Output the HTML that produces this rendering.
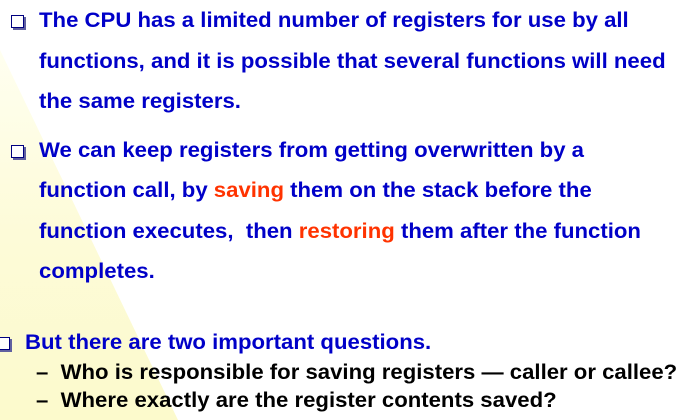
<html><body style="margin:0;width:681px;height:420px;overflow:hidden;background:#fff;position:relative;font-family:'Liberation Sans',sans-serif;font-weight:bold">
<svg width="681" height="420" style="position:absolute;left:0;top:0"><defs><linearGradient id="g" x1="0" y1="0" x2="0" y2="1"><stop offset="0" stop-color="#fffff0"/><stop offset="0.5" stop-color="#fdfbd8"/><stop offset="1" stop-color="#fcfacc"/></linearGradient></defs><polygon points="0,50 0,420 178,420" fill="url(#g)"/></svg>
<style>.l{position:absolute;white-space:nowrap;font-size:21px;color:#0000c8;line-height:24px;transform:scaleX(1.055);transform-origin:0 0}.b{position:absolute;width:11px;height:11px;border:1.5px solid #000080;box-shadow:2px 2px 0 #6060a0;background:#fff}.s{position:absolute;white-space:nowrap;font-size:21.5px;color:#000;line-height:22px;transform:scaleX(1.03);transform-origin:0 0}.r{color:#ff3300}</style>
<div class="b" style="left:11px;top:15px"></div>
<div class="l" style="left:39px;top:9px">The CPU has a limited number of registers for use by all</div>
<div class="l" style="left:39px;top:50px">functions, and it is possible that several functions will need</div>
<div class="l" style="left:39px;top:90px">the same registers.</div>
<div class="b" style="left:11px;top:145px"></div>
<div class="l" style="left:39px;top:139px">We can keep registers from getting overwritten by a</div>
<div class="l" style="left:39px;top:179px">function call, by <span class="r">saving</span> them on the stack before the</div>
<div class="l" style="left:39px;top:220px">function executes,&nbsp; then <span class="r">restoring</span> them after the function</div>
<div class="l" style="left:39px;top:260px">completes.</div>
<div class="b" style="left:-3px;top:337px"></div>
<div class="l" style="left:25px;top:331px">But there are two important questions.</div>
<div class="s" style="left:36px;top:361px">–&nbsp;&nbsp;Who is responsible for saving registers — caller or callee?</div>
<div class="s" style="left:36px;top:389px">–&nbsp;&nbsp;Where exactly are the register contents saved?</div>
</body></html>
